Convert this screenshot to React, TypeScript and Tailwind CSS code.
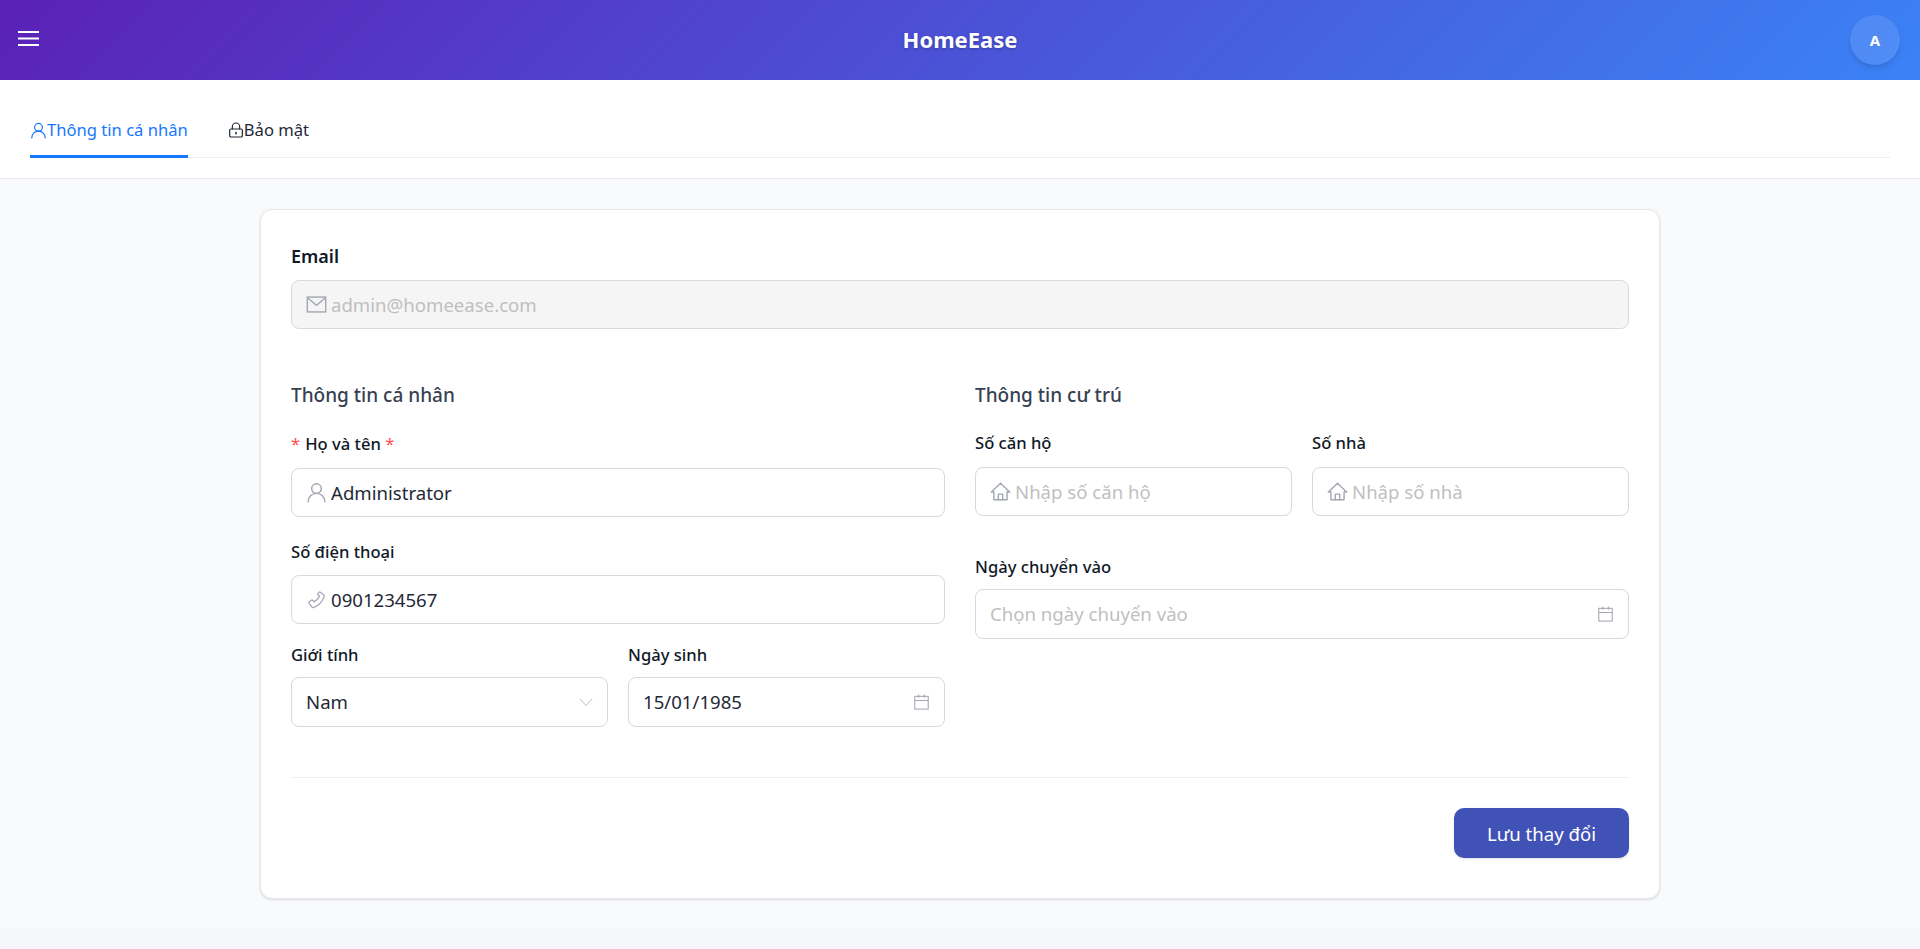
import React from 'react';

const font = { fontFamily: '"Noto Sans", Inter, sans-serif' };

type IconProps = { className?: string };

const svgProps = {
  viewBox: '0 0 24 24',
  fill: 'none',
  stroke: 'currentColor',
  strokeLinecap: 'round' as const,
  strokeLinejoin: 'round' as const,
};

const UserIcon = ({ className }: IconProps) => (
  <svg {...svgProps} strokeWidth={1.7} className={className}>
    <circle cx="12" cy="7.5" r="5.5" />
    <path d="M2.5 22.5c0-5.5 4-9.5 9.5-9.5s9.5 4 9.5 9.5" />
  </svg>
);

const LockIcon = ({ className }: IconProps) => (
  <svg {...svgProps} strokeWidth={1.8} className={className}>
    <rect x="2.5" y="10.5" width="19" height="12" rx="2" />
    <path d="M6.5 10.5V7a5.5 5.5 0 0 1 11 0v3.5" />
    <path d="M12 16v1.5" strokeWidth={2.4} />
  </svg>
);

const MailIcon = ({ className }: IconProps) => (
  <svg {...svgProps} strokeWidth={1.6} strokeLinejoin="miter" className={className}>
    <rect x="1.5" y="3.5" width="21" height="17" />
    <path d="M2 4.5l10 8.5 10-8.5" />
  </svg>
);

const PhoneIcon = ({ className }: IconProps) => (
  <svg {...svgProps} strokeWidth={1.5} className={className}>
    <path d="M15.5 3.2l4.8 3.4c.6.4.7 1 .5 1.6-1.8 6.4-6 10.8-12.3 13-.6.2-1.2 0-1.6-.5l-3.4-4.6c-.4-.6-.3-1.2.2-1.6l2.4-1.7c.5-.4 1.2-.3 1.6.2l1.3 1.7c3-1.5 5.2-3.7 6.6-6.6l-1.7-1.3c-.5-.4-.6-1.1-.2-1.6l.2-.4 1.6-1.5z" />
  </svg>
);

const HomeIcon = ({ className }: IconProps) => (
  <svg {...svgProps} strokeWidth={1.6} className={className}>
    <path d="M1.5 12.5L12 2.5l10.5 10h-3v9h-15v-9h-3z" />
    <path d="M9.5 21.5v-6.5h5v6.5" />
  </svg>
);

const CalendarIcon = ({ className }: IconProps) => (
  <svg {...svgProps} strokeWidth={1.5} strokeLinecap="butt" strokeLinejoin="miter" className={className}>
    <rect x="2.5" y="4" width="19" height="18" />
    <path d="M2.5 10h19M8 1.5V6M16 1.5V6" />
  </svg>
);

const ChevronIcon = ({ className }: IconProps) => (
  <svg {...svgProps} strokeWidth={1.3} className={className}>
    <path d="M2 7l10 11L22 7" />
  </svg>
);

const Label = ({ children, className = 'mb-[11px]' }: { children: React.ReactNode; className?: string }) => (
  <label className={`block text-[16.6px] leading-[24px] font-medium text-[#111827] ${className}`}>{children}</label>
);

const Field = ({
  icon,
  suffix,
  value,
  placeholder,
  disabled,
  className = 'h-[49px]',
}: {
  icon?: React.ReactNode;
  suffix?: React.ReactNode;
  value?: string;
  placeholder?: string;
  disabled?: boolean;
  className?: string;
}) => (
  <div
    className={`flex items-center px-[14px] gap-[4px] rounded-lg border border-[#d9d9d9] ${className} ${disabled ? 'bg-[#f5f5f5]' : 'bg-white'}`}
  >
    {icon}
    <input
      readOnly
      defaultValue={value}
      placeholder={placeholder}
      className={`flex-1 min-w-0 outline-none bg-transparent text-[18.6px] placeholder:text-[#bfbfbf] ${disabled ? 'text-[#bfbfbf]' : 'text-[#1f2937]'}`}
    />
    {suffix}
  </div>
);

const iconCls = 'w-[21px] h-[21px] shrink-0 text-[#a3a7b3]';
const calendar = <CalendarIcon className="w-[17px] h-[18px] shrink-0 text-[#a3a7b3]" />;

export default function App() {
  return (
    <div style={font} className="min-h-[949px] bg-[#f5f6fa] flex flex-col">
      <header className="h-[80px] flex items-center pl-[18px] pr-[20px] bg-[linear-gradient(135deg,#5b21b6,#3b82f6)]">
        <div className="flex-1">
          <svg viewBox="0 0 21 15" className="w-[21px] h-[15px] mb-[3px]" stroke="white" strokeWidth={2}>
            <path d="M0 1h21M0 7.5h21M0 14h21" />
          </svg>
        </div>
        <div className="text-[22px] font-bold text-white pb-[2px] pl-[2px] [text-shadow:0_1px_3px_rgba(0,0,0,0.25)]">HomeEase</div>
        <div className="flex-1 flex justify-end">
          <div className="w-[50px] h-[50px] rounded-full bg-white/10 shadow-md flex items-center justify-center text-white font-bold text-[15px]">
            A
          </div>
        </div>
      </header>

      <div className="bg-white h-[99px] px-[30px] pt-[30px] border-b border-[#e5e7eb]">
        <div className="flex gap-[40px] h-[48px] border-b border-[#eceef1]">
          <div className="flex items-start pt-[8px] h-[48px] border-b-[3px] border-[#1677ff] text-[#1677ff] text-[16.6px]">
            <UserIcon className="w-[17px] h-[17px] mt-[4px]" />
            <span>Thông tin cá nhân</span>
          </div>
          <div className="flex items-start pt-[8px] h-[48px] text-[#1f2937] text-[16.6px]">
            <LockIcon className="w-[16px] h-[16px] mt-[4px]" />
            <span>Bảo mật</span>
          </div>
        </div>
      </div>

      <main className="h-[749px] bg-[#f9fafc] pt-[30px]">
        <div className="w-[1400px] h-[690px] mx-auto bg-white rounded-xl border border-[#e5e7eb] shadow-sm px-[30px] pt-[34px]">
          <Label className="mb-[12px] !text-[18px] font-semibold">Email</Label>
          <Field disabled value="admin@homeease.com" icon={<MailIcon className={iconCls} />} />

          <div className="grid grid-cols-2 gap-[30px] mt-[52px]">
            <section>
              <h3 className="text-[19px] leading-[28px] font-medium text-[#374151] mb-[23px]">Thông tin cá nhân</h3>
              <Label className="mb-[12px]">
                <span className="text-[#ff4d4f] font-normal mr-[5px]">*</span>Họ và tên <span className="text-[#ff4d4f] font-normal">*</span>
              </Label>
              <Field value="Administrator" icon={<UserIcon className={iconCls} />} />
              <div className="mt-[23px]">
                <Label>Số điện thoại</Label>
                <Field value="0901234567" icon={<PhoneIcon className={iconCls} />} />
              </div>
              <div className="grid grid-cols-2 gap-[20px] mt-[19px]">
                <div>
                  <Label className="mb-[10px]">Giới tính</Label>
                  <Field
                    className="h-[50px]"
                    value="Nam"
                    suffix={<ChevronIcon className="w-[14px] h-[14px] text-[#a3a7b3]" />}
                  />
                </div>
                <div>
                  <Label className="mb-[10px]">Ngày sinh</Label>
                  <Field className="h-[50px]" value="15/01/1985" suffix={calendar} />
                </div>
              </div>
            </section>
            <section>
              <h3 className="text-[19px] leading-[28px] font-medium text-[#374151] mb-[22px]">Thông tin cư trú</h3>
              <div className="grid grid-cols-2 gap-[20px]">
                <div>
                  <Label className="mb-[12px]">Số căn hộ</Label>
                  <Field placeholder="Nhập số căn hộ" icon={<HomeIcon className={iconCls} />} />
                </div>
                <div>
                  <Label className="mb-[12px]">Số nhà</Label>
                  <Field placeholder="Nhập số nhà" icon={<HomeIcon className={iconCls} />} />
                </div>
              </div>
              <div className="mt-[39px]">
                <Label className="mb-[10px]">Ngày chuyển vào</Label>
                <Field className="h-[50px]" placeholder="Chọn ngày chuyển vào" suffix={calendar} />
              </div>
            </section>
          </div>

          <div className="border-t border-[#eceef1] mt-[50px] pt-[30px] flex justify-end">
            <button className="w-[175px] h-[50px] pt-[1px] rounded-[10px] bg-[#4052b5] text-white text-[18.6px] shadow-sm">Lưu thay đổi</button>
          </div>
        </div>
      </main>
    </div>
  );
}
